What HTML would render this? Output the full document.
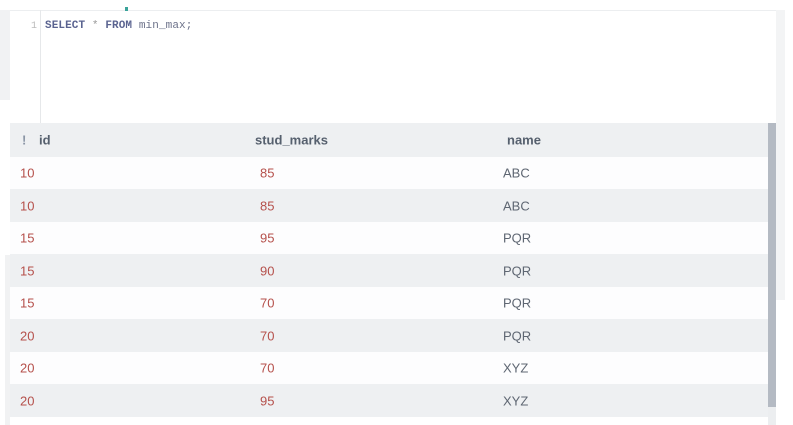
<!DOCTYPE html>
<html><head><style>
body{margin:0;width:793px;height:425px;background:#fff;position:relative;overflow:hidden;font-family:"Liberation Sans",sans-serif}
.abs{position:absolute}
.row{position:absolute;left:10px;width:758px;font-size:13px;color:#b5504b}
.row span{position:absolute;top:50%;transform:translateY(-50%)}
</style></head><body>
<div class="abs" style="left:0;top:10px;width:10px;height:90px;background:#f1f2f3"></div>
<div class="abs" style="left:5px;top:255px;width:5px;height:170px;background:#f1f2f3"></div>
<div class="abs" style="left:10px;top:10px;width:767px;height:113px;background:#fff;border-top:1px solid #eceef0"></div>
<div class="abs" style="left:125px;top:7px;width:3px;height:4px;background:#3aa39a"></div>
<div class="abs" style="left:40px;top:10px;width:1px;height:113px;background:#e6e8ea"></div>
<div class="abs" style="left:31px;top:21px;font-family:'Liberation Mono',monospace;font-size:10px;color:#bbb">1</div>
<div class="abs" style="left:45px;top:20px;font-family:'Liberation Mono',monospace;font-size:11px;color:#6b7189;letter-spacing:.1px"><b style="color:#5a6390">SELECT</b> <span style="color:#999">*</span> <b style="color:#5a6390">FROM</b> min_max;</div>
<div class="abs" style="left:776px;top:10px;width:9px;height:290px;background:#f3f4f5"></div>
<div class="row" style="top:123px;height:34px;background:#eef0f2;color:#56606e;font-weight:bold">
<span style="left:12px;color:#8a95a5">!</span><span style="left:29px">id</span><span style="left:245px">stud_marks</span><span style="left:497px">name</span></div>
<div class="row" style="top:157px;height:32px;background:#fdfdfe"><span style="left:10px">10</span><span style="left:250px">85</span><span style="left:493px;color:#5e6672">ABC</span></div>
<div class="row" style="top:189px;height:33px;background:#eef0f2"><span style="left:10px">10</span><span style="left:250px">85</span><span style="left:493px;color:#5e6672">ABC</span></div>
<div class="row" style="top:222px;height:32px;background:#fdfdfe"><span style="left:10px">15</span><span style="left:250px">95</span><span style="left:493px;color:#5e6672">PQR</span></div>
<div class="row" style="top:254px;height:33px;background:#eef0f2"><span style="left:10px">15</span><span style="left:250px">90</span><span style="left:493px;color:#5e6672">PQR</span></div>
<div class="row" style="top:287px;height:32px;background:#fdfdfe"><span style="left:10px">15</span><span style="left:250px">70</span><span style="left:493px;color:#5e6672">PQR</span></div>
<div class="row" style="top:319px;height:33px;background:#eef0f2"><span style="left:10px">20</span><span style="left:250px">70</span><span style="left:493px;color:#5e6672">PQR</span></div>
<div class="row" style="top:352px;height:32px;background:#fdfdfe"><span style="left:10px">20</span><span style="left:250px">70</span><span style="left:493px;color:#5e6672">XYZ</span></div>
<div class="row" style="top:384px;height:33px;background:#eef0f2"><span style="left:10px">20</span><span style="left:250px">95</span><span style="left:493px;color:#5e6672">XYZ</span></div>
<div class="abs" style="left:768px;top:123px;width:8px;height:284px;background:#b4bac3"></div>
<div class="abs" style="left:768px;top:407px;width:8px;height:18px;background:#eceef0"></div>
</body></html>
